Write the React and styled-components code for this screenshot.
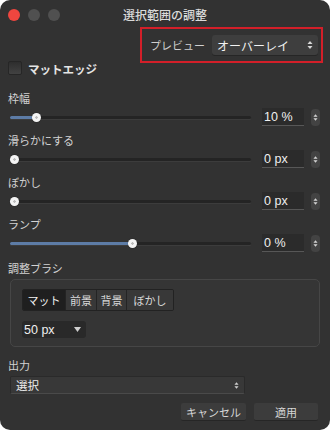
import React from "react";
import styled, { createGlobalStyle } from "styled-components";

const GlobalStyle = createGlobalStyle`
    html, body {
        margin: 0;
        padding: 0;
        background: #ffffff;
    }
    body {
        font-family: "Liberation Sans", "Noto Sans CJK JP", sans-serif;
    }
`;

const sliders = [
    { label: "枠幅", value: "10 %", pos: 11 },
    { label: "滑らかにする", value: "0 px", pos: 2 },
    { label: "ぼかし", value: "0 px", pos: 2 },
    { label: "ランプ", value: "0 %", pos: 51 },
];

const modes = [
    { label: "マット", width: 42, active: true },
    { label: "前景", width: 31 },
    { label: "背景", width: 30 },
    { label: "ぼかし", width: 47 },
];

function UpDown({ color = "#bdbdbd" }) {
    return (
        <svg width="6" height="10" viewBox="0 0 6 10">
            <path d="M0.5 4 L3 1 L5.5 4 Z" fill={color} />
            <path d="M0.5 6 L3 9 L5.5 6 Z" fill={color} />
        </svg>
    );
}

function Slider({ label, value, pos }) {
    return (
        <Section>
            <Label>{label}</Label>
            <SliderRow>
                <Track>
                    <Fill style={{ width: pos + "%" }} />
                    <Thumb style={{ left: pos + "%" }} />
                </Track>
                <Field>{value}</Field>
                <Stepper>
                    <UpDown color="#d4d4d4" />
                </Stepper>
            </SliderRow>
        </Section>
    );
}

export default function App() {
    return (
        <>
            <GlobalStyle />
            <Window>
                <TitleBar>
                    <Lights>
                        <Light color="#f0463f" />
                        <Light color="#505050" />
                        <Light color="#505050" />
                    </Lights>
                    <Title>選択範囲の調整</Title>
                    <div />
                </TitleBar>

                <PreviewRow>
                    <Highlight>
                        <PreviewLabel>プレビュー</PreviewLabel>
                        <PopUp>
                            <span>オーバーレイ</span>
                            <UpDown color="#d8d8d8" />
                        </PopUp>
                    </Highlight>
                </PreviewRow>

                <CheckRow>
                    <CheckBox />
                    <CheckText>マットエッジ</CheckText>
                </CheckRow>

                <Sliders>
                    {sliders.map((s) => (
                        <Slider key={s.label} {...s} />
                    ))}
                </Sliders>

                <Label $top={7}>調整ブラシ</Label>
                <GroupBox>
                    <Segmented>
                        {modes.map((m) => (
                            <Segment key={m.label} $active={m.active} $w={m.width}>
                                {m.label}
                            </Segment>
                        ))}
                    </Segmented>
                    <SizeMenu>
                        <span>50 px</span>
                        <svg width="7" height="5" viewBox="0 0 7 5">
                            <path d="M0 0 L7 0 L3.5 5 Z" fill="#d0d0d0" />
                        </svg>
                    </SizeMenu>
                </GroupBox>

                <Label $top={10}>出力</Label>
                <OutputMenu>
                    <span>選択</span>
                    <UpDown color="#cfcfcf" />
                </OutputMenu>

                <Buttons>
                    <Button $w={65}>キャンセル</Button>
                    <Button $w={64}>適用</Button>
                </Buttons>
            </Window>
        </>
    );
}

const Window = styled.div`
    width: 330px;
    height: 430px;
    box-sizing: border-box;
    background: #323232;
    border-radius: 10px;
    overflow: hidden;
    display: flex;
    flex-direction: column;
    color: #d6d6d6;
    font-size: 11px;
`;

const TitleBar = styled.div`
    height: 27px;
    flex-shrink: 0;
    display: grid;
    grid-template-columns: 1fr auto 1fr;
    align-items: center;
`;

const Lights = styled.div`
    display: flex;
    gap: 8px;
    padding-left: 8px;
    padding-top: 2px;
`;

const Light = styled.span`
    width: 12px;
    height: 12px;
    border-radius: 50%;
    background: ${(p) => p.color};
`;

const Title = styled.div`
    font-family: "Noto Sans CJK JP", sans-serif;
    font-size: 12px;
    font-weight: 500;
    color: #dadada;
    padding-top: 1px;
`;

const PreviewRow = styled.div`
    display: flex;
    justify-content: flex-end;
    padding-right: 7px;
    margin-bottom: -4px;
`;

const Highlight = styled.div`
    width: 183px;
    height: 36px;
    box-sizing: border-box;
    border: 2px solid #d31f29;
    display: flex;
    align-items: center;
    padding: 0 3px 0 8px;
    gap: 7px;
`;

const PreviewLabel = styled.span`
    font-family: "Noto Sans CJK JP", sans-serif;
    font-size: 11px;
    color: #cfcfcf;
    white-space: nowrap;
`;

const PopUp = styled.div`
    flex: 1;
    height: 20px;
    box-sizing: border-box;
    background: #3e3e3e;
    border-radius: 3px;
    box-shadow: 0 1px 0 #262626;
    display: flex;
    align-items: center;
    justify-content: space-between;
    padding: 0 5px 0 5px;
    font-family: "Noto Sans CJK JP", sans-serif;
    font-size: 12px;
    color: #f2f2f2;
`;

const CheckRow = styled.div`
    display: flex;
    align-items: center;
    gap: 6px;
    padding-left: 8px;
    height: 17px;
`;

const CheckBox = styled.span`
    width: 14px;
    height: 14px;
    box-sizing: border-box;
    border-radius: 2px;
    background: linear-gradient(#2e2e2e, #424242);
    border: 1px solid #262626;
`;

const CheckText = styled.span`
    font-family: "Noto Sans CJK JP", sans-serif;
    font-size: 11.5px;
    font-weight: 700;
    color: #e4e4e4;
    padding-top: 2px;
`;

const Sliders = styled.div`
    display: flex;
    flex-direction: column;
    gap: 5px;
    margin-top: 14px;
`;

const Section = styled.div`
    display: flex;
    flex-direction: column;
`;

const Label = styled.div`
    font-family: "Noto Sans CJK JP", sans-serif;
    font-size: 11px;
    line-height: 16px;
    height: 16px;
    color: #d2d2d2;
    padding-left: 8px;
    margin-top: ${(p) => p.$top || 0}px;
`;

const SliderRow = styled.div`
    height: 20px;
    margin-top: 1px;
    display: flex;
    align-items: center;
    padding: 0 10px 0 10px;
`;

const Track = styled.div`
    position: relative;
    flex: 1;
    height: 3px;
    border-radius: 2px;
    background: #242424;
    box-shadow: 0 1px 0 #3c3c3c;
    margin-right: 11px;
`;

const Fill = styled.div`
    height: 100%;
    border-radius: 2px;
    background: #5d7ca6;
`;

const Thumb = styled.span`
    position: absolute;
    top: 50%;
    width: 9px;
    height: 9px;
    margin: -4.5px 0 0 -4.5px;
    border-radius: 50%;
    background: radial-gradient(circle, #bcbcbc 0 1px, #f4f4f4 1.5px);
    box-shadow: 0 0 1px rgba(0, 0, 0, 0.6);
`;

const Field = styled.div`
    width: 42px;
    height: 18px;
    box-sizing: border-box;
    background: #2b2b2b;
    border-bottom: 1px solid #575757;
    font-size: 12.5px;
    color: #f0f0f0;
    line-height: 18px;
    padding-left: 2px;
`;

const Stepper = styled.div`
    width: 9px;
    height: 17px;
    margin-left: 7px;
    border-radius: 4px;
    background: #434343;
    display: flex;
    align-items: center;
    justify-content: center;
    svg {
        width: 5px;
        height: 11px;
    }
`;

const GroupBox = styled.div`
    margin: 3px 10px 0 10px;
    height: 68px;
    box-sizing: border-box;
    border: 1px solid #464646;
    border-radius: 5px;
    background: #353535;
    padding: 9px 0 0 11px;
    display: flex;
    flex-direction: column;
    align-items: flex-start;
`;

const Segmented = styled.div`
    display: flex;
    height: 22px;
    box-sizing: border-box;
    border: 1px solid #222;
    border-radius: 2px;
    overflow: hidden;
`;

const Segment = styled.div`
    width: ${(p) => p.$w}px;
    box-sizing: border-box;
    display: flex;
    align-items: center;
    justify-content: center;
    font-family: "Noto Sans CJK JP", sans-serif;
    font-size: 11px;
    color: ${(p) => (p.$active ? "#f2f2f2" : "#d8d8d8")};
    background: ${(p) => (p.$active ? "#1f1f1f" : "#383838")};
    border-left: ${(p) => (p.$active ? "none" : "1px solid #242424")};
`;

const SizeMenu = styled.div`
    margin-top: 10px;
    width: 64px;
    height: 17px;
    box-sizing: border-box;
    border-radius: 3px;
    background: #292929;
    display: flex;
    align-items: center;
    justify-content: space-between;
    padding: 0 5px 0 2px;
    font-size: 12.5px;
    color: #f0f0f0;
`;

const OutputMenu = styled.div`
    margin: 3px 0 0 10px;
    width: 235px;
    height: 18px;
    box-sizing: border-box;
    background: #383838;
    border: 1px solid #2a2a2a;
    border-bottom-color: #4a4a4a;
    border-radius: 2px;
    display: flex;
    align-items: center;
    justify-content: space-between;
    padding: 0 5px 0 5px;
    font-family: "Noto Sans CJK JP", sans-serif;
    font-size: 11.5px;
    color: #ededed;
    svg {
        width: 5px;
        height: 9px;
    }
`;

const Buttons = styled.div`
    display: flex;
    justify-content: flex-end;
    gap: 8px;
    margin-top: 9px;
    padding-right: 12px;
`;

const Button = styled.div`
    width: ${(p) => p.$w}px;
    height: 18px;
    box-sizing: border-box;
    background: #3c3c3c;
    border-radius: 2px;
    border-bottom: 1px solid #262626;
    display: flex;
    align-items: center;
    justify-content: center;
    font-family: "Noto Sans CJK JP", sans-serif;
    font-size: 11px;
    color: #d6d6d6;
`;
